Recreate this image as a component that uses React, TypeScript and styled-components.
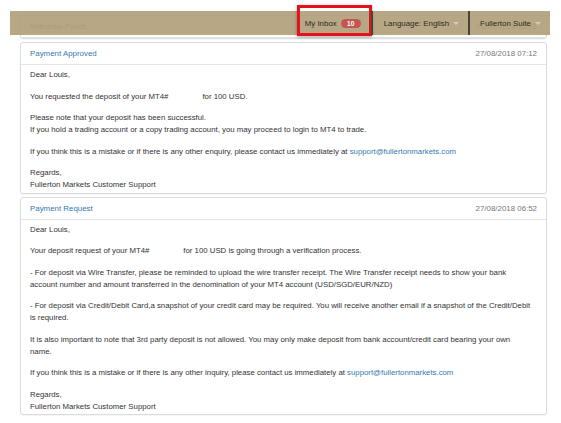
import React from 'react'
import styled, { createGlobalStyle } from 'styled-components'

const GlobalStyle = createGlobalStyle`
  html, body {
    margin: 0;
    padding: 0;
    background: #fff;
  }
  body {
    font-family: "Liberation Sans", Arial, sans-serif;
    color: #333;
  }
`

const Page = styled.div`
  position: relative;
  width: 561px;
  min-height: 423px;
  padding: 15px 14px 0 20px;
  box-sizing: border-box;
`

// header bar floats over the scrolled message list
const TopBar = styled.div`
  position: absolute;
  top: 11px;
  left: 10px;
  width: 540px;
  height: 24px;
  background: rgba(177, 159, 121, 0.92);
  display: flex;
  justify-content: flex-end;
  align-items: stretch;
  z-index: 2;
`

const NavItem = styled.div<{ $divider?: boolean; $marked?: boolean; $pl: number; $pr: number }>`
  position: relative;
  display: flex;
  align-items: center;
  gap: 4px;
  padding: 0 ${(p) => p.$pr}px 0 ${(p) => p.$pl}px;
  font-size: 7.9px;
  color: #2f2b24;
  border-left: ${(p) => (p.$divider ? '2px solid #4a4336' : 'none')};
  white-space: nowrap;

  &::after {
    content: '';
    display: ${(p) => (p.$marked ? 'block' : 'none')};
    position: absolute;
    top: -6px;
    bottom: -1px;
    left: 0;
    right: -1px;
    border: 3px solid #e4121b;
    box-shadow: 0 1px 3px rgba(0, 0, 0, 0.35);
  }
`

const Badge = styled.span`
  display: inline-block;
  min-width: 20px;
  height: 9px;
  line-height: 9px;
  border-radius: 5px;
  background: #c4564f;
  color: #fff;
  font-size: 6.5px;
  font-weight: bold;
  text-align: center;
`

const Caret = styled.span`
  width: 0;
  height: 0;
  border-left: 3px solid transparent;
  border-right: 3px solid transparent;
  border-top: 3px solid #d6ccb5;
`

const List = styled.div`
  display: flex;
  flex-direction: column;
  gap: 3px;
`

const Card = styled.div`
  border: 1px solid #dcdcdc;
  border-radius: 3px;
  background: #fff;
  box-shadow: 0 1px 1px rgba(0, 0, 0, 0.04);
`

const CardHead = styled.div`
  display: flex;
  justify-content: space-between;
  align-items: center;
  height: 21px;
  padding: 0 9px;
  border-bottom: 1px solid #e6e6e6;
  font-size: 7.9px;
`

const Title = styled.span`
  color: #3479b0;
`

const Stamp = styled.span`
  color: #777;
`

const CardBody = styled.div`
  padding: 4px 9px 2px;
  font-size: 7.8px;
  line-height: 11.8px;
  color: #333;

  p {
    margin: 0 0 9.8px;
  }
  p:last-child {
    margin-bottom: 0;
  }
`

const Hidden = styled.span<{ $w: number }>`
  display: inline-block;
  width: ${(p) => p.$w}px;
`

const Mail = styled.a`
  color: #3479b0;
  text-decoration: none;
`

export default function App() {
  return (
    <>
      <GlobalStyle />
      <Page>
        <TopBar>
          <NavItem $marked $pl={8} $pr={10}>
            My Inbox <Badge>10</Badge>
          </NavItem>
          <NavItem $divider $pl={11} $pr={9}>
            Language: English <Caret />
          </NavItem>
          <NavItem $divider $pl={10} $pr={9}>
            Fullerton Suite <Caret />
          </NavItem>
        </TopBar>

        <List>
          <Card>
            <CardHead>
              <Title>Withdraw Funds</Title>
              <Stamp>01/09/2018 11:21</Stamp>
            </CardHead>
          </Card>

          <Card>
            <CardHead>
              <Title>Payment Approved</Title>
              <Stamp>27/08/2018 07:12</Stamp>
            </CardHead>
            <CardBody>
              <p>Dear Louis,</p>
              <p>
                You requested the deposit of your MT4#<Hidden $w={34} />for 100 USD.
              </p>
              <p>
                Please note that your deposit has been successful.
                <br />
                If you hold a trading account or a copy trading account, you may proceed to login to MT4 to trade.
              </p>
              <p>
                If you think this is a mistake or if there is any other enquiry, please contact us immediately at{' '}
                <Mail href="#">support@fullertonmarkets.com</Mail>
              </p>
              <p>
                Regards,
                <br />
                Fullerton Markets Customer Support
              </p>
            </CardBody>
          </Card>

          <Card>
            <CardHead>
              <Title>Payment Request</Title>
              <Stamp>27/08/2018 06:52</Stamp>
            </CardHead>
            <CardBody>
              <p>Dear Louis,</p>
              <p>
                Your deposit request of your MT4#<Hidden $w={34} />for 100 USD is going through a verification process.
              </p>
              <p>
                - For deposit via Wire Transfer, please be reminded to upload the wire transfer receipt. The Wire Transfer receipt needs to show your bank
                <br />
                account number and amount transferred in the denomination of your MT4 account (USD/SGD/EUR/NZD)
              </p>
              <p>
                - For deposit via Credit/Debit Card,a snapshot of your credit card may be required. You will receive another email if a snapshot of the Credit/Debit
                <br />
                is required.
              </p>
              <p>
                It is also important to note that 3rd party deposit is not allowed. You may only make deposit from bank account/credit card bearing your own
                <br />
                name.
              </p>
              <p>
                If you think this is a mistake or if there is any other inquiry, please contact us immediately at{' '}
                <Mail href="#">support@fullertonmarkets.com</Mail>
              </p>
              <p>
                Regards,
                <br />
                Fullerton Markets Customer Support
              </p>
            </CardBody>
          </Card>
        </List>
      </Page>
    </>
  )
}
